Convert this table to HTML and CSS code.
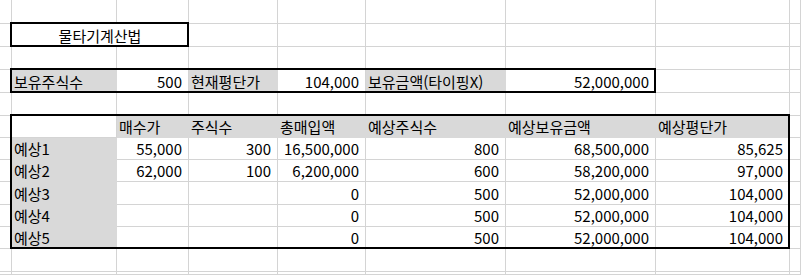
FILE: index.html
```html
<!DOCTYPE html>
<html lang="ko">
<head>
<meta charset="utf-8">
<title>물타기계산법</title>
<link rel="stylesheet" href="styles.css">
</head>
<body>
<div class="stack">
<div class="sheet cells">
  <!-- row 1 -->
  <div class="c"></div><div class="c"></div><div class="c"></div><div class="c"></div><div class="c"></div><div class="c"></div><div class="c"></div><div class="c"></div><div class="c"></div>
  <!-- row 2 -->
  <div class="c"></div><div class="c ctr span2">물타기계산법</div><div class="c"></div><div class="c"></div><div class="c"></div><div class="c"></div><div class="c"></div><div class="c"></div>
  <!-- row 3 -->
  <div class="c"></div><div class="c"></div><div class="c"></div><div class="c"></div><div class="c"></div><div class="c"></div><div class="c"></div><div class="c"></div><div class="c"></div>
  <!-- row 4 -->
  <div class="c"></div>
  <div class="c g">보유주식수</div>
  <div class="c r">500</div>
  <div class="c g">현재평단가</div>
  <div class="c r">104,000</div>
  <div class="c g">보유금액(타이핑X)</div>
  <div class="c r">52,000,000</div>
  <div class="c"></div><div class="c"></div>
  <!-- row 5 -->
  <div class="c"></div><div class="c"></div><div class="c"></div><div class="c"></div><div class="c"></div><div class="c"></div><div class="c"></div><div class="c"></div><div class="c"></div>
  <!-- row 6 -->
  <div class="c"></div><div class="c"></div>
  <div class="c g">매수가</div>
  <div class="c g">주식수</div>
  <div class="c g">총매입액</div>
  <div class="c g">예상주식수</div>
  <div class="c g">예상보유금액</div>
  <div class="c g">예상평단가</div>
  <div class="c"></div>
  <!-- row 7 -->
  <div class="c"></div><div class="c g">예상1</div>
  <div class="c r">55,000</div><div class="c r">300</div><div class="c r">16,500,000</div><div class="c r">800</div><div class="c r">68,500,000</div><div class="c r">85,625</div>
  <div class="c"></div>
  <!-- row 8 -->
  <div class="c"></div><div class="c g">예상2</div>
  <div class="c r">62,000</div><div class="c r">100</div><div class="c r">6,200,000</div><div class="c r">600</div><div class="c r">58,200,000</div><div class="c r">97,000</div>
  <div class="c"></div>
  <!-- row 9 -->
  <div class="c"></div><div class="c g">예상3</div>
  <div class="c r"></div><div class="c r"></div><div class="c r">0</div><div class="c r">500</div><div class="c r">52,000,000</div><div class="c r">104,000</div>
  <div class="c"></div>
  <!-- row 10 -->
  <div class="c"></div><div class="c g">예상4</div>
  <div class="c r"></div><div class="c r"></div><div class="c r">0</div><div class="c r">500</div><div class="c r">52,000,000</div><div class="c r">104,000</div>
  <div class="c"></div>
  <!-- row 11 -->
  <div class="c"></div><div class="c g">예상5</div>
  <div class="c r"></div><div class="c r"></div><div class="c r">0</div><div class="c r">500</div><div class="c r">52,000,000</div><div class="c r">104,000</div>
  <div class="c"></div>
  <!-- row 12 -->
  <div class="c"></div><div class="c"></div><div class="c"></div><div class="c"></div><div class="c"></div><div class="c"></div><div class="c"></div><div class="c"></div><div class="c"></div>
  <!-- row 13 -->
  <div class="c"></div><div class="c"></div><div class="c"></div><div class="c"></div><div class="c"></div><div class="c"></div><div class="c"></div><div class="c"></div><div class="c"></div>
</div>

<!-- thick outlines, laid on the same grid over the cells -->
<div class="sheet frames">
  <div class="frame frame-title"></div>
  <div class="frame frame-hold"></div>
  <div class="frame frame-plan"></div>
</div>
</div>
</body>
</html>
```

FILE: styles.css
```css
html, body {
  margin: 0;
  padding: 0;
  background: #ffffff;
}

.stack {
  display: grid;
  height: 275px;
  overflow: hidden;
}

.stack > .sheet {
  grid-area: 1 / 1;
}

.sheet {
  display: grid;
  grid-template-columns: 12px 105px 72px 89px 88px 140px 150px 134px 1fr;
  grid-template-rows: 24px 23px 23px 23px 23px 22px 22px 22px 23px 22px 22px 23px 1fr;
  height: 275px;
  font-family: "Noto Sans CJK KR", "Noto Sans", sans-serif;
  font-size: 15px;
  color: #000000;
}

.frames {
  pointer-events: none;
}

.c {
  box-sizing: border-box;
  border-right: 1px solid #d4d4d4;
  border-bottom: 1px solid #d4d4d4;
  display: flex;
  align-items: center;
  padding: 0 6px 0 2px;
  white-space: nowrap;
  overflow: hidden;
  line-height: 1;
  min-width: 0;
}

.g {
  background: #d9d9d9;
  border-color: #d9d9d9;
}

.r {
  justify-content: flex-end;
}

.ctr {
  justify-content: center;
  padding: 0;
}

.span2 {
  grid-column: span 2;
}

.frame {
  box-sizing: border-box;
  border: 2px solid #000000;
  margin: -2px 0 0 -2px;
}

.frame-title {
  grid-row: 2;
  grid-column: 2 / 4;
}

.frame-hold {
  grid-row: 4;
  grid-column: 2 / 8;
}

.frame-plan {
  grid-row: 6 / 12;
  grid-column: 2 / 9;
}
```
